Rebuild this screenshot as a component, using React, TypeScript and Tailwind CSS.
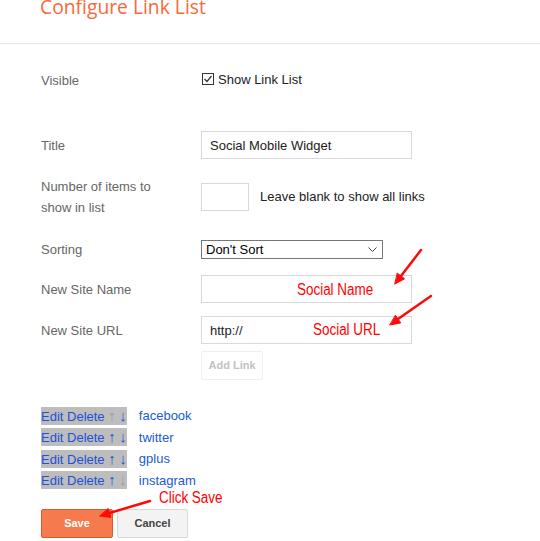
import React from "react";

const links = [
  { name: "facebook", upOff: true, downOff: false },
  { name: "twitter", upOff: false, downOff: false },
  { name: "gplus", upOff: false, downOff: false },
  { name: "instagram", upOff: false, downOff: true },
];

function Row({ label, children, className = "" }: { label: React.ReactNode; children: React.ReactNode; className?: string }) {
  return (
    <div className={`flex items-center ${className}`}>
      <div className="w-[160px] shrink-0 text-[13px] leading-[21px] text-[#666]">{label}</div>
      {children}
    </div>
  );
}

const inputCls =
  "h-[28px] w-[211px] border border-[#d9d9d9] px-[8px] text-[13px] text-[#222] outline-none bg-white";

const note = "absolute origin-left scale-x-[0.84] text-[16px] leading-[18px] text-[#ff0000] whitespace-nowrap";

export default function App() {
  return (
    <div className="relative w-[540px] h-[541px] overflow-hidden bg-white font-['Liberation_Sans',Arial,sans-serif]">
      <div className="flow-root h-[44px] border-b border-[#e6e6e6] pl-[40px]">
        <h2 className="mt-[-7px] font-['Open_Sans',sans-serif] text-[19.3px] leading-[28px] text-[#f8683a]">
          Configure Link List
        </h2>
      </div>

      <div className="pl-[41px]">
        <Row label="Visible" className="mt-[26px] h-[20px]">
          <label className="flex items-center text-[13px] text-[#222]">
            <span className="mt-[-3px] ml-[1px] flex h-[12px] w-[12px] items-center justify-center border border-[#333] bg-white">
              <svg width="10" height="10" viewBox="0 0 10 10">
                <path d="M1.5 5 L4 7.5 L8.5 2" fill="none" stroke="#333" strokeWidth="1.2" />
              </svg>
            </span>
            <span className="ml-[4px]">Show Link List</span>
          </label>
        </Row>

        <Row label="Title" className="mt-[41px]">
          <input className={inputCls} readOnly defaultValue="Social Mobile Widget" />
        </Row>

        <Row
          label={
            <>
              Number of items to
              <br />
              show in list
            </>
          }
          className="mt-[14px] h-[48px]"
        >
          <input className="h-[28px] w-[48px] border border-[#d9d9d9] bg-white outline-none" readOnly />
          <span className="ml-[11px] text-[13px] text-[#222]">Leave blank to show all links</span>
        </Row>

        <Row label="Sorting" className="mt-[18px]">
          <div className="flex h-[19px] w-[182px] items-center justify-between border border-[#767676] bg-white pl-[4px] pr-[5px] text-[13px] text-black">
            <span>Don't Sort</span>
            <svg width="9" height="6" viewBox="0 0 9 6">
              <path d="M0.5 0.5 L4.5 4.5 L8.5 0.5" fill="none" stroke="#444" strokeWidth="1" />
            </svg>
          </div>
        </Row>

        <Row label="New Site Name" className="mt-[15px]">
          <input className={inputCls} readOnly defaultValue="" />
        </Row>

        <Row label="New Site URL" className="mt-[13px]">
          <input className={inputCls} readOnly defaultValue="http://" />
        </Row>

        <div className="mt-[7px] pl-[160px]">
          <button
            disabled
            className="h-[29px] w-[62px] rounded-[2px] border border-[#eeeeee] bg-white text-[11px] font-bold text-[#c2c2c2]"
          >
            Add Link
          </button>
        </div>

        <ul className="mt-[25px]">
          {links.map((l) => (
            <li key={l.name} className="flex h-[21.5px] items-center text-[13px]">
              <span className="inline-block h-[18px] bg-[#bdbdbd] leading-[18px] text-[#2151d4]">
                Edit Delete <span className={`text-[15px] ${l.upOff ? "text-[#9a9a9a]" : ""}`}>↑</span>{" "}
                <span className={`text-[15px] ${l.downOff ? "text-[#9a9a9a]" : ""}`}>↓</span>
              </span>
              <span className="ml-[12px] text-[#1a5bd0]">{l.name}</span>
            </li>
          ))}
        </ul>

        <div className="mt-[18px] flex gap-[4px]">
          <button className="h-[29px] w-[72px] rounded-[2px] border border-[#e0592c] bg-[#f57a4e] text-[11px] font-bold text-white">
            Save
          </button>
          <button className="h-[29px] w-[71px] rounded-[2px] border border-[#d9d9d9] bg-[#f3f3f3] text-[11px] font-bold text-[#444]">
            Cancel
          </button>
        </div>
      </div>

      {/* annotations */}
      <span className={`${note} left-[297px] top-[281px]`}>Social Name</span>
      <span className={`${note} left-[313px] top-[321px]`}>Social URL</span>
      <span className={`${note} left-[159px] top-[489px]`}>Click Save</span>
      <svg className="pointer-events-none absolute left-0 top-0" width="540" height="541">
        <g stroke="#ff0a0a" strokeWidth="2.5" strokeLinecap="round" fill="#ff0a0a">
          <line x1="421" y1="250" x2="401" y2="276" />
          <polygon points="395,284 404.6,278.8 397.5,273.3" strokeWidth="1" />
          <line x1="431" y1="296" x2="398" y2="319" />
          <polygon points="390,325 400.8,322.9 395.6,315.5" strokeWidth="1" />
          <line x1="150" y1="501" x2="109.5" y2="513" />
          <polygon points="100,516 110.9,517.4 108.3,508.8" strokeWidth="1" />
        </g>
      </svg>
    </div>
  );
}
